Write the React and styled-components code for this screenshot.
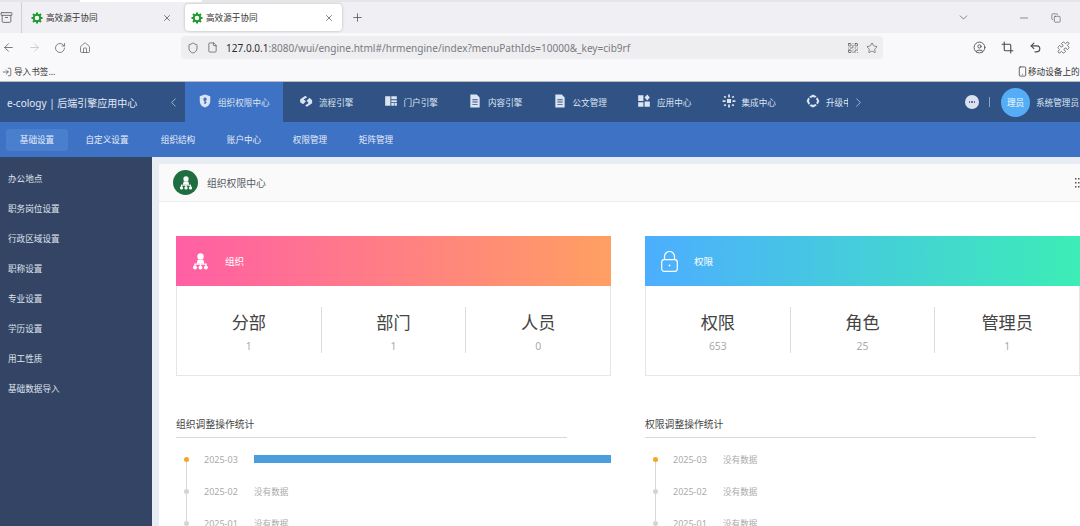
import React from "react";
import styled, { createGlobalStyle } from "styled-components";
import { ArrowLeft, ArrowRight, RotateCw, Home, Shield, File, QrCode, Star, CircleUser, Crop, Undo2, Puzzle, X, Plus, ChevronDown, ChevronLeft, ChevronRight, Minus, Copy, LogIn, Smartphone, Archive } from "lucide-react";

const Global = createGlobalStyle`
  html, body { margin: 0; padding: 0; background: #fff; }
  * { box-sizing: border-box; }
  body { font-family: "Noto Sans", "Noto Sans CJK SC", sans-serif; }
`;

const Page = styled.div`width: 1080px; height: 526px; overflow: hidden; display: flex; flex-direction: column; position: relative;`;

const TopStrip = styled.div`height: 2px; background: #e6e6e8; display: flex; flex-shrink: 0;`;
const TopStripLit = styled.div`width: 122px; margin-left: 80px; background: #fff;`;

const TabStrip = styled.div`height: 31px; background: #f0f0f4; display: flex; align-items: center; flex-shrink: 0; color: #4a4a4f;`;
const TabsButton = styled.div`width: 22px; height: 31px; border-right: 1px solid #cfcfd4; display: flex; align-items: center; color: #55555a;`;
const Tab = styled.div`
  width: 157px; height: 27px; margin-left: ${p => p.$gap}px; display: flex; align-items: center;
  padding: 0 8px 0 ${p => p.$active ? 6 : 8}px;
  border-radius: 4px; gap: 3px; font-size: 8.6px; color: #333;
  background: ${p => p.$active ? "#fff" : "transparent"};
  box-shadow: ${p => p.$active ? "0 0 3px rgba(0,0,0,.25)" : "none"};
`;
const TabTitle = styled.span`flex: 1;`;
const NewTab = styled.div`margin-left: 9px; display: flex;`;
const WinControls = styled.div`margin-left: auto; display: flex; align-items: center; color: #4a4a4f; padding-right: 19px;`;
const WinButton = styled.div`margin-left: ${p => p.$gap}px; display: flex;`;

const Toolbar = styled.div`height: 29px; background: #f9f9fb; display: flex; align-items: center; flex-shrink: 0; color: #55555a;`;
const NavButtons = styled.div`width: 181px; display: flex; align-items: center; padding-left: 2px; gap: 13px;`;
const UrlBar = styled.div`width: 702px; height: 23px; background: #eeeef1; border-radius: 4px; display: flex; align-items: center; padding: 0 5px 0 6px; color: #4f4f54;`;
const UrlText = styled.div`margin-left: 8px; font-size: 10.05px; color: #7a7a7f; flex: 1; white-space: nowrap;`;
const UrlHost = styled.span`color: #2b2b30;`;
const UrlIcons = styled.div`display: flex; align-items: center; gap: 7px;`;
const ToolIcons = styled.div`margin-left: 90px; display: flex; align-items: center; gap: 15px; color: #4a4a4f;`;

const Bookmarks = styled.div`height: 20px; background: #f9f9fb; border-bottom: 1px solid #b9bcc2; display: flex; align-items: center; justify-content: space-between; flex-shrink: 0; font-size: 8.6px; color: #333; padding-left: 2px;`;
const Bookmark = styled.div`display: flex; align-items: center; gap: 2px; white-space: nowrap; & > svg { flex-shrink: 0; }`;
const MobileBookmark = styled(Bookmark)`width: 63px; overflow: hidden; flex-shrink: 0; gap: 0;`;

const Header = styled.div`height: 40px; background: #315285; display: flex; align-items: stretch; flex-shrink: 0; color: #dde6f2;`;
const Brand = styled.div`width: 164px; padding-left: 7px; font-size: 10px; display: flex; align-items: center; white-space: nowrap; color: #e4eaf3;`;
const CollapseBtn = styled.div`width: 21px; padding-left: 2px; display: flex; align-items: center; color: #c6d2e4;`;
const NavScroll = styled.div`width: 663px; display: flex; overflow: hidden;`;
const NavItem = styled.div`
  flex: 0 0 ${p => p.$active ? 98 : 84.5}px; padding-left: ${p => p.$active ? 13 : 16}px; display: flex; align-items: center; gap: 6px;
  font-size: 8.6px; white-space: nowrap; overflow: hidden;
  background: ${p => p.$active ? "#3d72c4" : "transparent"};
`;
const NavIcon = styled.svg`width: 14px; height: 14px; flex-shrink: 0; fill: #dbe4f0; margin-top: -2px;`;
const NavNext = styled.div`width: 20px; display: flex; align-items: center; padding-left: 3px; color: #c6d2e4;`;
const HeaderRight = styled.div`flex: 1; display: flex; align-items: center; white-space: nowrap; overflow: hidden; padding-left: 97px;`;
const MoreDot = styled.div`width: 14px; height: 14px; border-radius: 50%; background: #dbe2ee; display: flex; align-items: center; justify-content: center; gap: 1px; flex-shrink: 0;`;
const Pip = styled.i`width: 1.6px; height: 1.6px; border-radius: 50%; background: #3a5a8c; display: block;`;
const VSep = styled.div`width: 1px; height: 10px; background: #8fa3c2; margin: 0 11px 0 10px; flex-shrink: 0;`;
const Avatar = styled.div`width: 29px; height: 29px; border-radius: 50%; background: #55adf5; color: #fff; font-size: 8.6px; display: flex; align-items: center; justify-content: center; flex-shrink: 0;`;
const UserName = styled.span`margin-left: 6px; font-size: 8.6px;`;

const SubNav = styled.div`height: 35px; background: #3d72c4; display: flex; align-items: center; padding-left: 6px; flex-shrink: 0;`;
const SubItem = styled.div`
  width: ${p => p.$w}px; height: 22px; border-radius: 3px; display: flex; align-items: center; justify-content: center;
  font-size: 8.6px; color: #e6edf8; white-space: nowrap;
  background: ${p => p.$active ? "#4a7fce" : "transparent"};
`;

const Main = styled.div`flex: 1; display: flex; min-height: 0;`;
const Sidebar = styled.div`width: 152px; background: #344465; padding-top: 6.5px; flex-shrink: 0;`;
const SideItem = styled.div`height: 30px; padding-left: 8px; display: flex; align-items: center; font-size: 8.6px; color: #dfe4ec;`;
const ContentArea = styled.div`flex: 1; background: #e8edf3; padding: 7px 0 0 7px; min-width: 0;`;
const Panel = styled.div`background: #fff; height: 100%; overflow: hidden;`;
const PanelHead = styled.div`height: 38px; background: #fafafa; border-bottom: 1px solid #ececec; display: flex; align-items: center; padding-left: 14px; position: relative;`;
const OrgBadge = styled.div`width: 25px; height: 25px; border-radius: 50%; background: #1f6e3f; display: flex; align-items: center; justify-content: center;`;
const PanelTitle = styled.span`margin-left: 9px; font-size: 9.8px; color: #55595f;`;
const GridIcon = styled.svg`margin-left: auto; width: 5px; height: 10px; fill: #555; flex-shrink: 0;`;
const PanelBody = styled.div`padding: 34px 0 0 17px; display: grid; grid-template-columns: 435px 435px; column-gap: 34px;`;

const Card = styled.div`height: 140px; border: 1px solid #e6e6e6; border-top: 0;`;
const CardHead = styled.div`
  height: 50px; margin: 0 -1px; display: flex; align-items: center; padding-left: 16px; gap: 16px; color: #fff; font-size: 9.6px;
  background: linear-gradient(90deg, ${p => p.$from}, ${p => p.$to});
`;
const CardStats = styled.div`display: flex; padding-top: 21px;`;
const Stat = styled.div`
  flex: 1; height: 46px; padding-top: 2px; display: flex; flex-direction: column; align-items: center;
  & + & { border-left: 1px solid #dcdcdc; }
`;
const StatLabel = styled.div`font-size: 17.2px; line-height: 28px; color: #444;`;
const StatValue = styled.div`font-size: 10.4px; line-height: 18px; color: #aaa;`;

const Section = styled.div`margin-top: 40px;`;
const SectionTitle = styled.div`width: 391px; height: 22px; border-bottom: 1px solid #d8d8d8; font-size: 9.8px; line-height: 17px; color: #444;`;
const Timeline = styled.div`padding-top: 5px;`;
const Row = styled.div`height: 32px; display: flex; align-items: center; padding-left: 8px; position: relative;`;
const Dot = styled.div`
  width: 5px; height: 5px; border-radius: 50%; background: ${p => p.$first ? "#f5a623" : "#d4d4d4"}; flex-shrink: 0;
  &::after { content: ""; position: absolute; left: 10px; top: 19px; width: 1px; height: 27px; background: #d8d8d8; }
`;
const DateText = styled.div`margin-left: 15px; width: 50px; font-size: 9px; color: #aaa; flex-shrink: 0;`;
const Empty = styled.div`font-size: 8.6px; color: #aaa;`;
const Bar = styled.div`flex: 1; height: 8px; background: #4a9edb;`;

const Gear = () => (
  <svg width="12" height="12" viewBox="0 0 24 24" style={{ flexShrink: 0 }}>
    <g stroke="#1f9a2c" strokeWidth="4">
      <line x1="12" y1="1" x2="12" y2="23" /><line x1="1" y1="12" x2="23" y2="12" />
      <line x1="4" y1="4" x2="20" y2="20" /><line x1="20" y1="4" x2="4" y2="20" />
    </g>
    <circle cx="12" cy="12" r="6.5" fill="#fff" stroke="#1f9a2c" strokeWidth="4" />
  </svg>
);

const OrgIcon = ({ size }) => (
  <svg width={size} height={size} viewBox="0 0 24 24" fill="#fff">
    <circle cx="12" cy="5" r="4.5" />
    <path d="M8 9.500h8l1.500 5.500h-11z" />
    <rect x="3.500" y="15" width="17" height="1.600" />
    <rect x="3.500" y="15" width="1.600" height="4" /><rect x="11.200" y="15" width="1.600" height="4" /><rect x="18.900" y="15" width="1.600" height="4" />
    <circle cx="4.300" cy="20.500" r="2.800" /><circle cx="12" cy="20.500" r="2.800" /><circle cx="19.700" cy="20.500" r="2.800" />
  </svg>
);

const LockIcon = () => (
  <svg width="17" height="21" viewBox="0 0 17 21" fill="none" stroke="#fff" strokeWidth="1.200">
    <rect x="0.700" y="8.700" width="15.600" height="11.600" rx="2.500" />
    <path d="M3.500 8.700V5.500a5 5 0 0 1 10 0v3.200" />
    <circle cx="8.500" cy="14.500" r="0.900" fill="#fff" stroke="none" />
  </svg>
);

const navIcons = {
  shield: <path fillRule="evenodd" d="M12 1l9 3v8c0 6-4 9.500-9 11-5-1.500-9-5-9-11V4zM12 6a3 3 0 0 0-1.200 5.700V17h2.400v-1.500h1.500v-1.700h-1.500v-2.100A3 3 0 0 0 12 6z" />,
  flow: <path d="M2 9l9-6 3 2.500-6 4 4 3-5 5-5-3.500zM13 11.500l5-5 4.500 4v5.500l-9 6-3-2.500 6-4z" />,
  portal: <path d="M2 4h9v16H2zM12.500 4H22v5h-9.500zM12.500 10.500H22V14h-9.500zM12.500 15.500H17V20h-4.500zM18 15.500h4V20h-4z" />,
  doc: <path fillRule="evenodd" d="M4 1h11l5 5v17H4zM7.500 9v1.600h9V9zM7.500 13v1.600h9V13zM7.500 17v1.600h9V17z" />,
  apps: <path d="M2 2h9v10H2zM13 13h9v9h-9zM2 14h9v8H2zM17.500 1l4.500 5-4.500 5-4.500-5z" />,
  snow: <path d="M8.500 8.500h7v7h-7zM10.500 1h3v5h-3zM10.500 18h3v5h-3zM1 10.500h5v3H1zM18 10.500h5v3h-5zM4 3l3.500 1.500L6 7 3 5.500zM20 3l1 2.500L18 7l-1.500-2.500zM4 21l-1-2.500L6 17l1.500 2.500zM20 21l-3.500-1.500L18 17l3 1.500z" />,
  loop: <path d="M12 1l6 3-2.500 2.500L12 5 8 7 5.500 4.500zM23 12l-3 6-2.500-2.500L19 12l-2-4 2.500-2.500zM12 23l-6-3 2.500-2.500L12 19l4-2 2.500 2.500zM1 12l3-6 2.500 2.500L5 12l2 4-2.500 2.500z" />,
};

const navData = [
  ["shield", "组织权限中心"], ["flow", "流程引擎"], ["portal", "门户引擎"], ["doc", "内容引擎"],
  ["doc", "公文管理"], ["apps", "应用中心"], ["snow", "集成中心"], ["loop", "升级中心"],
];
const subData = [["基础设置", 62], ["自定义设置", 78], ["组织结构", 64], ["账户中心", 68], ["权限管理", 64], ["矩阵管理", 68]];
const sideData = ["办公地点", "职务岗位设置", "行政区域设置", "职称设置", "专业设置", "学历设置", "用工性质", "基础数据导入"];

const StatCard = ({ from, to, icon, title, stats }) => (
  <Card>
    <CardHead $from={from} $to={to}>{icon}<span>{title}</span></CardHead>
    <CardStats>
      {stats.map(([l, v]) => (
        <Stat key={l}><StatLabel>{l}</StatLabel><StatValue>{v}</StatValue></Stat>
      ))}
    </CardStats>
  </Card>
);

const TimeSection = ({ title, hasBar }) => (
  <Section>
    <SectionTitle>{title}</SectionTitle>
    <Timeline>
      {["2025-03", "2025-02", "2025-01"].map((d, i) => (
        <Row key={d}>
          <Dot $first={i === 0} />
          <DateText>{d}</DateText>
          {hasBar && i === 0 ? <Bar /> : <Empty>没有数据</Empty>}
        </Row>
      ))}
    </Timeline>
  </Section>
);

export default function App() {
  return (
    <Page>
      <Global />
      <TopStrip><TopStripLit /></TopStrip>
      <TabStrip>
        <TabsButton><Archive size={13} strokeWidth={1.5} /></TabsButton>
        <Tab $gap={1}><Gear /><TabTitle>高效源于协同</TabTitle><X size={10} strokeWidth={1.5} /></Tab>
        <Tab $gap={5} $active><Gear /><TabTitle>高效源于协同</TabTitle><X size={10} strokeWidth={1.5} /></Tab>
        <NewTab><Plus size={13} strokeWidth={1.4} /></NewTab>
        <WinControls>
          <ChevronDown size={13} strokeWidth={1.2} />
          <WinButton $gap={48}><Minus size={12} strokeWidth={1.2} /></WinButton>
          <WinButton $gap={21}><Copy size={10} strokeWidth={1.4} /></WinButton>
        </WinControls>
      </TabStrip>
      <Toolbar>
        <NavButtons>
          <ArrowLeft size={13} strokeWidth={1.4} />
          <ArrowRight size={13} strokeWidth={1.2} color="#b8b8bc" />
          <RotateCw size={12} strokeWidth={1.4} />
          <Home size={12} strokeWidth={1.4} />
        </NavButtons>
        <UrlBar>
          <Shield size={12} strokeWidth={1.4} />
          <File size={11} strokeWidth={1.5} style={{ marginLeft: 8 }} />
          <UrlText><UrlHost>127.0.0.1</UrlHost>:8080/wui/engine.html#/hrmengine/index?menuPathIds=10000&_key=cib9rf</UrlText>
          <UrlIcons>
            <QrCode size={12} strokeWidth={1.5} />
            <Star size={12} strokeWidth={1.3} />
          </UrlIcons>
        </UrlBar>
        <ToolIcons>
          <CircleUser size={13} strokeWidth={1.6} />
          <Crop size={13} strokeWidth={2} />
          <Undo2 size={13} strokeWidth={2} />
          <Puzzle size={13} strokeWidth={1.3} />
        </ToolIcons>
      </Toolbar>
      <Bookmarks>
        <Bookmark><LogIn size={10} strokeWidth={1.5} />导入书签...</Bookmark>
        <MobileBookmark><Smartphone size={11} strokeWidth={1.6} />移动设备上的书签</MobileBookmark>
      </Bookmarks>
      <Header>
        <Brand>e-cology | 后端引擎应用中心</Brand>
        <CollapseBtn><ChevronLeft size={15} strokeWidth={1.2} /></CollapseBtn>
        <NavScroll>
          {navData.map(([ic, t], i) => (
            <NavItem key={t} $active={i === 0}>
              <NavIcon viewBox="0 0 24 24">{navIcons[ic]}</NavIcon>
              <span>{t}</span>
            </NavItem>
          ))}
        </NavScroll>
        <NavNext><ChevronRight size={15} strokeWidth={1.2} /></NavNext>
        <HeaderRight>
          <MoreDot><Pip /><Pip /><Pip /></MoreDot>
          <VSep />
          <Avatar>理员</Avatar>
          <UserName>系统管理员</UserName>
        </HeaderRight>
      </Header>
      <SubNav>
        {subData.map(([t, w], i) => <SubItem key={t} $w={w} $active={i === 0}>{t}</SubItem>)}
      </SubNav>
      <Main>
        <Sidebar>{sideData.map(t => <SideItem key={t}>{t}</SideItem>)}</Sidebar>
        <ContentArea>
          <Panel>
            <PanelHead>
              <OrgBadge><OrgIcon size={14} /></OrgBadge>
              <PanelTitle>组织权限中心</PanelTitle>
              <GridIcon viewBox="0 0 5 10">
                <rect x="0" y="0" width="1.500" height="1.500" /><rect x="3" y="0" width="1.500" height="1.500" />
                <rect x="0" y="4" width="1.500" height="1.500" /><rect x="3" y="4" width="1.500" height="1.500" />
                <rect x="0" y="8" width="1.500" height="1.500" /><rect x="3" y="8" width="1.500" height="1.500" />
              </GridIcon>
            </PanelHead>
            <PanelBody>
              <StatCard from="#ff5fa5" to="#ff9f62" icon={<OrgIcon size={17} />} title="组织"
                stats={[["分部", 1], ["部门", 1], ["人员", 0]]} />
              <StatCard from="#4daeff" to="#3cedb6" icon={<LockIcon />} title="权限"
                stats={[["权限", 653], ["角色", 25], ["管理员", 1]]} />
              <TimeSection title="组织调整操作统计" hasBar />
              <TimeSection title="权限调整操作统计" />
            </PanelBody>
          </Panel>
        </ContentArea>
      </Main>
    </Page>
  );
}
